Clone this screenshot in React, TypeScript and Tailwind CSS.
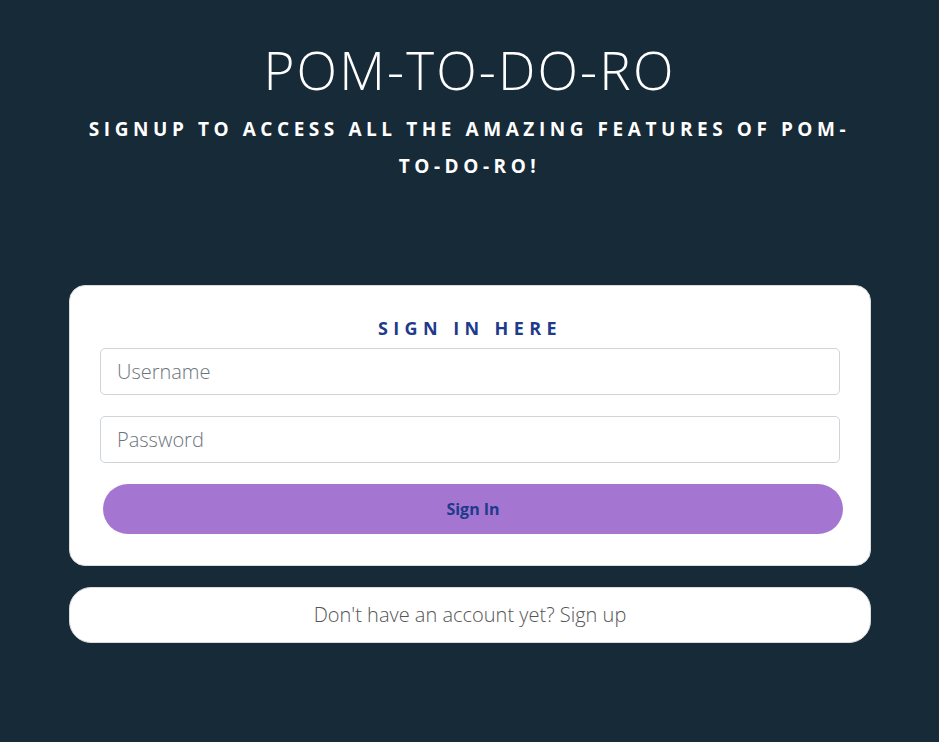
import { useState } from 'react';

export default function App() {
  const [username, setUsername] = useState('');
  const [password, setPassword] = useState('');

  return (
    <div
      className="min-h-[742px] bg-[#172a38] flex flex-col items-center"
      style={{ fontFamily: '"Open Sans", "Liberation Sans", sans-serif' }}
    >
      {/* Header */}
      <div className="pt-[38px] text-center text-white">
        <h1 className="text-[53px] font-light leading-[64px] tracking-[0.04em]">POM-TO-DO-RO</h1>
        <p className="mt-[9px] w-[790px] mx-auto text-[19px] font-bold uppercase tracking-[0.24em] leading-[37px]">
          Signup to access all the amazing features of pom-to-do-ro!
        </p>
      </div>

      {/* Sign in card */}
      <div className="mt-[100px] ml-[1px] w-[802px] bg-white rounded-[16px] border border-[#dcdcdc] px-[30px] pt-[28px] pb-[31px]">
        <h2 className="text-center text-[18px] font-bold uppercase tracking-[0.3em] text-[#1e3a8a] leading-[28px]">
          Sign in here
        </h2>
        <form className="mt-[6px] flex flex-col" onSubmit={(e) => e.preventDefault()}>
          <input
            value={username}
            onChange={(e) => setUsername(e.target.value)}
            placeholder="Username"
            className="h-[47px] w-full rounded-[5px] border border-[#ced4da] px-[16px] text-[20px] font-light text-[#495057] placeholder:text-[#6c757d] outline-none"
          />
          <input
            type="password"
            value={password}
            onChange={(e) => setPassword(e.target.value)}
            placeholder="Password"
            className="mt-[21px] h-[47px] w-full rounded-[5px] border border-[#ced4da] px-[16px] text-[20px] font-light text-[#495057] placeholder:text-[#6c757d] outline-none"
          />
          <button
            type="submit"
            className="mt-[21px] ml-[3px] h-[50px] w-[740px] rounded-full bg-[#a576d1] text-[16px] font-bold text-[#1e3a8a]"
          >
            Sign In
          </button>
        </form>
      </div>

      {/* Sign up card */}
      <div className="mt-[21px] ml-[1px] w-[802px] h-[56px] bg-white rounded-[22px] border border-[#dcdcdc] flex items-center justify-center">
        <p className="text-[20px] font-light text-[#555]">
          Don't have an account yet? <a href="#" className="text-[#555]">Sign up</a>
        </p>
      </div>
    </div>
  );
}
